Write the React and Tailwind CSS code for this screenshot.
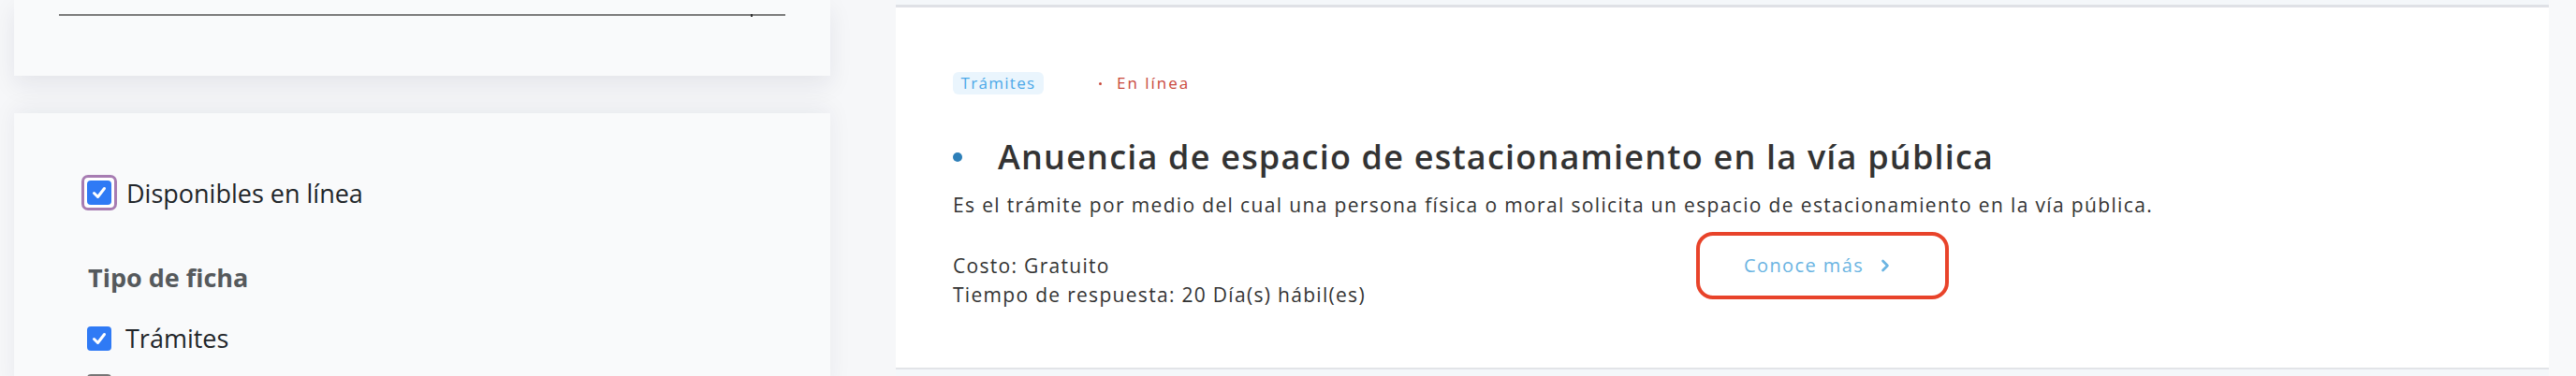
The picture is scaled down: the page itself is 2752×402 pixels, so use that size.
import React from "react";

const Check = ({ checked = true }) => (
  <div
    className={
      checked
        ? "w-[26px] h-[26px] rounded-[4px] bg-[#2f7af5] flex items-center justify-center shrink-0"
        : "w-[26px] h-[26px] rounded-[4px] bg-white border-2 border-[#767676] shrink-0"
    }
  >
    {checked && (
      <svg width="18" height="18" viewBox="0 0 18 18">
        <path d="M3.5 9.5 L7.5 13.5 L14.5 4.5" fill="none" stroke="white" strokeWidth="3" strokeLinecap="round" strokeLinejoin="round" />
      </svg>
    )}
  </div>
);

const Filters = () => (
  <div className="flex flex-col font-['Open_Sans',sans-serif]">
    {/* TOP PANEL (SEARCH) */}
    <div className="h-[81px] bg-[#f9fafb] shadow-[0_10px_24px_rgba(20,30,60,0.08)] pt-[15px] px-[48px] relative z-10">
      <div className="h-[2px] bg-[#7b7b7b] relative">
        <div className="absolute left-[739px] top-0 w-[2px] h-[3px] bg-[#333]" />
      </div>
    </div>
    {/* FILTER PANEL */}
    <div className="mt-[40px] h-[300px] bg-[#f9fafb] shadow-[0_-6px_24px_rgba(20,30,60,0.06)] pl-[72px] pt-[66px]">
      <label className="flex items-center gap-[10px]">
        <div className="p-[3px] rounded-[7px] border-[3px] border-[#a77cb2] bg-white">
          <Check />
        </div>
        <span className="text-[27px] text-[#212529] leading-none">Disponibles en línea</span>
      </label>
      <div className="pl-[7px] mt-[58px] text-[27px] font-bold text-[#55595c] leading-none">Tipo de ficha</div>
      <label className="pl-[6px] mt-[38px] flex items-center gap-[15px]">
        <Check />
        <span className="text-[27px] text-[#212529] leading-none">Trámites</span>
      </label>
      <label className="pl-[6px] mt-[24px] flex items-center gap-[15px]">
        <Check checked={false} />
        <span className="text-[27px] text-[#212529] leading-none">Servicios</span>
      </label>
    </div>
  </div>
);

const ResultCard = () => (
  <div className="bg-white border-t-[3px] border-b-2 border-t-[#dfe1e6] border-b-[#e2e4e8] h-[390px] pl-[61px] pt-[69px] font-['Open_Sans',sans-serif] text-[#333]">
    {/* TAGS */}
    <div className="flex items-center h-[24px]">
      <span className="h-[24px] w-[97px] rounded-[6px] bg-[#eaf5fd] text-[#4aa8e8] text-[17px] tracking-[1.3px] flex items-center justify-center">
        Trámites
      </span>
      <span className="ml-[59px] w-[3px] h-[3px] rounded-full bg-[#c9483b]" />
      <span className="ml-[16px] text-[17px] tracking-[2px] text-[#c9483b]">En línea</span>
    </div>
    {/* TITLE */}
    <div className="mt-[45px] flex items-center">
      <span className="w-[10px] h-[10px] rounded-full bg-[#2d7fb8] shrink-0" />
      <h2 className="ml-[38px] text-[36px] font-semibold leading-[44px] tracking-[1.2px] text-[#333]">
        Anuencia de espacio de estacionamiento en la vía pública
      </h2>
    </div>
    <p className="mt-[14px] text-[21px] leading-[30px] tracking-[1.35px]">
      Es el trámite por medio del cual una persona física o moral solicita un espacio de estacionamiento en la vía pública.
    </p>
    {/* DETAILS + BUTTON */}
    <div className="mt-[14px] flex items-start">
      <div className="w-[794px] pt-[21px] text-[21px] leading-[31px] tracking-[1.3px]">
        <div>Costo: Gratuito</div>
        <div>Tiempo de respuesta: 20 Día(s) hábil(es)</div>
      </div>
      <button className="w-[270px] h-[72px] rounded-[18px] border-[4px] border-[#e8432a] flex items-center pl-[47px] gap-[18px] text-[#6ab4e2]">
        <span className="text-[20px] tracking-[1.4px]">Conoce más</span>
        <svg width="10" height="14" viewBox="0 0 10 14">
          <path d="M2.5 2 L7.5 7 L2.5 12" fill="none" stroke="#6ab4e2" strokeWidth="2.6" strokeLinecap="round" strokeLinejoin="round" />
        </svg>
      </button>
    </div>
  </div>
);

export default function App() {
  return (
    <div className="w-[2752px] h-[402px] bg-[#f6f7f9] flex overflow-hidden">
      <div className="w-[957px] shrink-0 pl-[15px] pr-[70px]">
        <Filters />
      </div>
      <div className="w-[1766px] shrink-0 bg-[#f4f7fa] pt-[5px]">
        <ResultCard />
      </div>
      <div className="flex-1 bg-[#f8f9fa]" />
    </div>
  );
}
